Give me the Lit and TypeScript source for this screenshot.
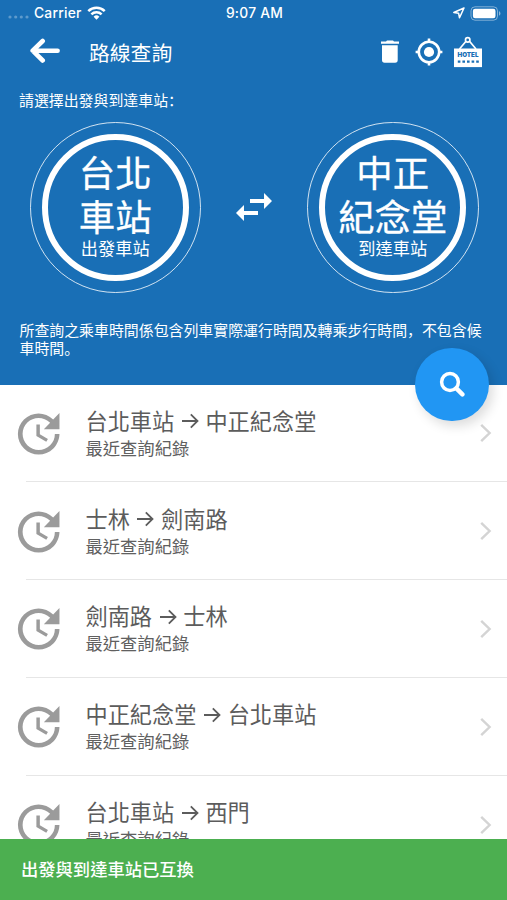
import { LitElement, html, css, svg } from "lit";
import { customElement, property } from "lit/decorators.js";

interface Query {
  from: string;
  to: string;
}

const QUERIES: Query[] = [
  { from: "台北車站", to: "中正紀念堂" },
  { from: "士林", to: "劍南路" },
  { from: "劍南路", to: "士林" },
  { from: "中正紀念堂", to: "台北車站" },
  { from: "台北車站", to: "西門" },
];

@customElement("status-bar")
class StatusBar extends LitElement {
  static styles = css`
    :host {
      display: grid;
      grid-template-columns: 1fr auto 1fr;
      align-items: center;
      height: 26px;
      padding: 0 6px 0 8px;
      font: 500 13.8px/26px Inter, "Liberation Sans", sans-serif;
      letter-spacing: 0.25px;
      color: #fff;
    }
    .left {
      display: flex;
      align-items: center;
      gap: 5px;
    }
    .right {
      display: flex;
      align-items: center;
      justify-content: flex-end;
      gap: 4px;
    }
    .dots {
      margin-top: 8px;
    }
    svg {
      display: block;
    }
  `;
  render() {
    return html`
      <div class="left">
        <svg class="dots" width="21" height="4" viewBox="0 0 21 4" fill="#fff" fill-opacity=".3">
          ${[2, 7.7, 13.3, 19].map((x) => svg`<circle cx=${x} cy="2" r="1.6" />`)}
        </svg>
        <span>Carrier</span>
        <svg width="19" height="14" viewBox="0 0 19 14" fill="none" stroke="#fff" stroke-width="2.5">
          <path d="M1.3 5.1a11.6 11.6 0 0 1 16.4 0" />
          <path d="M4.4 8.3a7.2 7.2 0 0 1 10.2 0" />
          <path d="M9.5 13.8l-2.9-3a4.1 4.1 0 0 1 5.8 0z" fill="#fff" stroke="none" />
        </svg>
      </div>
      <span>9:07 AM</span>
      <div class="right">
        <svg width="14" height="12" viewBox="0 0 14 12" fill="none" stroke="#fff" stroke-width="1.5" stroke-linejoin="round">
          <path d="M12 1L1.8 5.5l4.8.7.9 4.6z" />
        </svg>
        <svg width="31" height="15" viewBox="0 0 31 15">
          <rect x="1" y=".8" width="26.5" height="13.4" rx="4" fill="none" stroke="#fff" stroke-opacity=".45" />
          <rect x="2.9" y="2.8" width="22.6" height="9.4" rx="2.2" fill="#fff" />
          <path d="M29 5.3c1.9.7 1.9 3.7 0 4.4z" fill="#fff" fill-opacity=".5" />
        </svg>
      </div>
    `;
  }
}

@customElement("station-dial")
class StationDial extends LitElement {
  @property({ type: Array }) lines: string[] = [];
  @property() label = "";
  static styles = css`
    :host {
      display: flex;
      box-sizing: border-box;
      width: 171.5px;
      height: 171.5px;
      padding: 11.3px;
      border: 1px solid rgba(255, 255, 255, 0.8);
      border-radius: 50%;
    }
    .ring {
      flex: 1;
      display: flex;
      flex-direction: column;
      align-items: center;
      justify-content: center;
      padding-bottom: 6px;
      border: 6.6px solid #fff;
      border-radius: 50%;
      color: #fff;
      white-space: nowrap;
    }
    .name {
      font-size: 36.4px;
      line-height: 43.5px;
      -webkit-text-stroke: 0.3px #fff;
    }
    .label {
      font-size: 17.2px;
      line-height: 21px;
    }
  `;
  render() {
    return html`<div class="ring">
      ${this.lines.map((l) => html`<div class="name">${l}</div>`)}
      <div class="label">${this.label}</div>
    </div>`;
  }
}

@customElement("history-row")
class HistoryRow extends LitElement {
  @property() from = "";
  @property() to = "";
  static styles = css`
    :host {
      display: grid;
      grid-template-columns: 75px 1fr auto;
      box-sizing: border-box;
      height: 97.8px;
      flex: none;
      padding: 0 12px 0 10.5px;
      align-items: center;
      color: #5c5c5c;
      background: linear-gradient(#e6e6e6, #e6e6e6) 26px 100% / 100% 1px no-repeat;
    }
    .route {
      display: flex;
      align-items: center;
      gap: 6.6px;
      font-size: 22.2px;
      line-height: 28px;
    }
    .arrow {
      margin-top: 3px;
    }
    .sub {
      font-size: 17.3px;
      line-height: 27px;
      color: #606060;
    }
    svg {
      display: block;
    }
  `;
  render() {
    return html`
      <svg width="55.4" height="55.4" viewBox="0 0 24 24" fill="#9b9b9b">
        <path
          d="M21 10.12h-6.78l2.74-2.82c-2.73-2.7-7.15-2.8-9.88-.1-2.73 2.71-2.73 7.08 0 9.79s7.15 2.71 9.88 0C18.32 15.65 19 14.08 19 12.1h2c0 1.98-.88 4.55-2.64 6.29-3.51 3.48-9.21 3.48-12.72 0-3.5-3.47-3.53-9.11-.02-12.58s9.14-3.47 12.65 0L21 3v7.12zM12.5 8v4.25l3.5 2.08-.72 1.21L11 13V8h1.5z"
        />
      </svg>
      <div>
        <div class="route">
          <span>${this.from}</span>
          <svg class="arrow" width="18" height="16" viewBox="0 0 18 16" fill="none" stroke="#5c5c5c" stroke-width="1.8">
            <path d="M1 8h15.5M9.8 1.4L16.5 8l-6.7 6.6" />
          </svg>
          <span>${this.to}</span>
        </div>
        <div class="sub">最近查詢紀錄</div>
      </div>
      <svg width="16" height="20" viewBox="0 0 16 20" fill="none" stroke="#d4d4d4" stroke-width="2.4">
        <path d="M2.2 1.8L10.6 10l-8.4 8.2" />
      </svg>
    `;
  }
}

@customElement("app-root")
class AppRoot extends LitElement {
  static styles = css`
    :host {
      position: relative;
      display: flex;
      flex-direction: column;
      width: 507px;
      height: 900px;
      overflow: hidden;
      background: #fff;
      font-family: "Noto Sans CJK TC", sans-serif;
    }
    svg {
      display: block;
    }
    .hero {
      flex: none;
      position: relative;
      box-sizing: border-box;
      height: 384.5px;
      background: #196fb6;
      color: #fff;
    }
    .bar {
      display: flex;
      align-items: center;
      height: 52px;
      padding: 0 24px 0 29px;
    }
    .title {
      flex: 1;
      margin-left: 28px;
      font-size: 20.8px;
      line-height: 30px;
    }
    .actions {
      display: flex;
      align-items: center;
    }
    .aim {
      margin: 0 10.5px 0 15px;
    }
    .hotel {
      font: 900 6.6px Inter, sans-serif;
    }
    .prompt,
    .note {
      font-family: "Noto Sans CJK SC", sans-serif;
      font-size: 14.92px;
    }
    .prompt {
      margin: 11px 0 0 19px;
      line-height: 22px;
    }
    .dials {
      display: flex;
      align-items: center;
      justify-content: space-between;
      margin: 10.5px 28.5px 0 29.5px;
    }
    .note {
      margin: 28px 19px 0 19.5px;
      line-height: 17.6px;
    }
    .fab {
      position: absolute;
      right: 18.5px;
      bottom: -36.7px;
      z-index: 2;
      display: grid;
      place-items: center;
      width: 73.4px;
      height: 73.4px;
      border-radius: 50%;
      background: #2196f3;
      box-shadow: 4px 5px 12px rgba(0, 0, 0, 0.14);
    }
    .list {
      flex: 1;
      min-height: 0;
      display: flex;
      flex-direction: column;
      overflow: hidden;
    }
    .toast {
      flex: none;
      box-sizing: border-box;
      height: 61px;
      padding-left: 21px;
      background: #4caf50;
      color: #fff;
      font-weight: 500;
      font-size: 17.3px;
      line-height: 60px;
    }
  `;
  render() {
    return html`
      <div class="hero">
        <status-bar></status-bar>
        <div class="bar">
          <svg width="32" height="28" viewBox="0 0 32 28" fill="none" stroke="#fff" stroke-width="4.6" stroke-linecap="round" stroke-linejoin="round">
            <path d="M28.6 12.7H4M13.7 3L3.7 12.7l10 9.8" />
          </svg>
          <div class="title">路線查詢</div>
          <div class="actions">
            <svg width="20" height="24" viewBox="0 0 20 24" fill="#fff">
              <path d="M2 5.2h15.7v14.9a2.6 2.6 0 0 1-2.6 2.6H4.6A2.6 2.6 0 0 1 2 20.1zM1 1.6h5L7 .6h6l1 1h5v2.2H1z" />
            </svg>
            <svg class="aim" width="28" height="28" viewBox="0 0 28 28" fill="none" stroke="#fff" stroke-width="2.6">
              <circle cx="14" cy="14" r="10.2" />
              <circle cx="14" cy="14" r="5.1" fill="#fff" stroke="none" />
              <path d="M14 .6v4M14 23.4v4M.6 14h4M23.4 14h4" />
            </svg>
            <svg width="30" height="32" viewBox="0 0 30 32">
              <path d="M6.5 13L13.2 5M23 13L16.3 5" stroke="#fff" stroke-width="1.7" fill="none" />
              <circle cx="14.7" cy="3.9" r="2.2" stroke="#fff" stroke-width="1.7" fill="none" />
              <rect x="1" y="12.5" width="28" height="18.6" fill="#fff" />
              <text class="hotel" x="15" y="21.3" text-anchor="middle" textLength="21" lengthAdjust="spacingAndGlyphs" fill="#196fb6">HOTEL</text>
              <path d="M4.8 25.6h21" stroke="#196fb6" stroke-width="2.4" stroke-dasharray="2.6 2" />
            </svg>
          </div>
        </div>
        <div class="prompt">請選擇出發與到達車站：</div>
        <div class="dials">
          <station-dial .lines=${["台北", "車站"]} label="出發車站"></station-dial>
          <svg width="48" height="48" viewBox="0 0 24 24" fill="#fff">
            <path d="M6.99 11L3 15l3.99 4v-3H14v-2H6.99v-3zM21 9l-3.99-4v3H10v2h7.01v3L21 9z" />
          </svg>
          <station-dial .lines=${["中正", "紀念堂"]} label="到達車站"></station-dial>
        </div>
        <div class="note">所查詢之乘車時間係包含列車實際運行時間及轉乘步行時間，不包含候車時間。</div>
        <div class="fab">
          <svg width="26" height="26" viewBox="0 0 26 26" fill="none" stroke="#fff" stroke-linecap="round">
            <circle cx="11" cy="11" r="8.4" stroke-width="3.5" />
            <path d="M17.4 17.4l6 6" stroke-width="4.4" />
          </svg>
        </div>
      </div>
      <div class="list">
        ${QUERIES.map((q) => html`<history-row .from=${q.from} .to=${q.to}></history-row>`)}
      </div>
      <div class="toast">出發與到達車站已互換</div>
    `;
  }
}
